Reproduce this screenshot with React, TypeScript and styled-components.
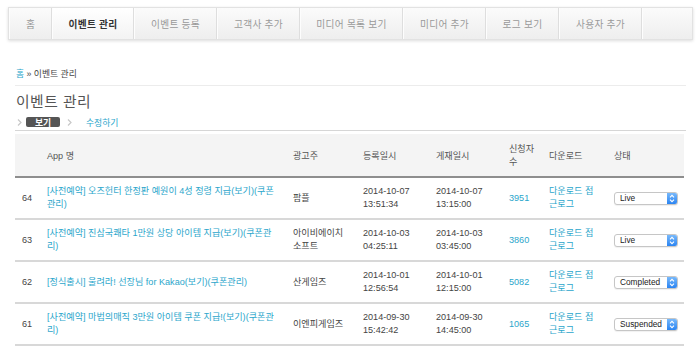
import React from "react";
import styled, { createGlobalStyle, css } from "styled-components";

const Global = createGlobalStyle`
  html, body { margin: 0; padding: 0; background: #fff; }
  body {
    font-family: "Liberation Sans", "Noto Sans CJK KR", sans-serif;
    color: #333;
  }
`;

const Page = styled.div`
  padding: 7px 7px 0 8px;
`;

const Nav = styled.nav`
  display: flex;
  width: 685px;
  height: 33px;
  box-sizing: border-box;
  background: linear-gradient(#fbfbfb, #eeeeee);
  border: 1px solid #e2e2e2;
  box-shadow: 0 1px 3px rgba(0, 0, 0, 0.14);
`;

const NavItem = styled.a<{ $w: number; $active?: boolean }>`
  display: flex;
  align-items: center;
  justify-content: center;
  width: ${(p) => p.$w}px;
  box-sizing: border-box;
  font-size: 9.7px;
  color: #999;
  letter-spacing: 0.3px;
  border-left: 1px solid #fdfdfd;
  border-right: 1px solid #dedede;
  text-decoration: none;
  ${(p) =>
    p.$active &&
    css`
      color: #333;
      font-weight: bold;
      background: linear-gradient(#ffffff, #f3f3f3);
    `}
`;

const NavFill = styled.div`
  flex: 1;
  border-left: 1px solid #fdfdfd;
`;

const Content = styled.div`
  width: 671px;
  margin-left: 7px;
`;

const Breadcrumb = styled.div`
  margin-top: 28px;
  height: 12px;
  line-height: 12px;
  padding: 0 0 5px 1px;
  border-bottom: 1px solid #ececec;
  font-size: 8.8px;
  color: #444;
`;

const Link = styled.a`
  color: #2ba6cb;
  text-decoration: none;
`;

const Title = styled.h1`
  margin: 6px 0 0 1px;
  height: 20px;
  line-height: 20px;
  font-size: 14.8px;
  font-weight: normal;
  color: #555;
  letter-spacing: 0.5px;
`;

const Tabs = styled.div`
  display: flex;
  align-items: center;
  margin-top: 5px;
  height: 10px;
  padding-bottom: 3px;
  border-bottom: 1px solid #d6d6d6;
`;

const Chevron = styled.svg<{ $gap: number }>`
  width: 5px;
  height: 7px;
  margin: 0 4px 0 ${(p) => p.$gap}px;
`;

const Tab = styled.a<{ $active?: boolean }>`
  display: flex;
  align-items: center;
  height: 10px;
  font-size: 8.8px;
  color: #2ba6cb;
  text-decoration: none;
  padding: 0 0 0 10px;
  ${(p) =>
    p.$active &&
    css`
      background: #555;
      color: #fff;
      font-weight: bold;
      border-radius: 2px;
      width: 34px;
      box-sizing: border-box;
      padding: 0 0 0 9px;
    `}
`;

const Table = styled.table`
  margin-top: 3px;
  width: 669px;
  border-collapse: collapse;
  table-layout: fixed;
  font-size: 9.1px;
  line-height: 13px;
`;

const Th = styled.th`
  height: 40px;
  padding: 2px 4px 0 7px;
  background: #f4f4f4;
  border-bottom: 2px solid #8e8e8e;
  text-align: left;
  font-weight: normal;
  color: #555;
  vertical-align: middle;
`;

const Td = styled.td<{ $right?: number }>`
  height: 40px;
  padding: 0 ${(p) => p.$right ?? 4}px 0 7px;
  border-bottom: 2px solid #d8d8d8;
  color: #444;
  vertical-align: middle;
`;

const Select = styled.div`
  display: flex;
  align-items: center;
  width: 64px;
  height: 13px;
  box-sizing: border-box;
  border: 1px solid #c6c6c6;
  border-radius: 3px;
  background: #fff;
  overflow: hidden;
  box-shadow: 0 1px 1px rgba(0, 0, 0, 0.06);
  font-size: 8.3px;
  color: #222;
`;

const SelectLabel = styled.span`
  flex: 1;
  padding-left: 5px;
  line-height: 11px;
`;

const SelectButton = styled.span`
  display: flex;
  align-items: center;
  justify-content: center;
  width: 10px;
  height: 100%;
  background: linear-gradient(#78b9fb, #2a84f2);
`;

const navItems: [string, number, boolean?][] = [
  ["홈", 43],
  ["이벤트 관리", 82, true],
  ["이벤트 등록", 83],
  ["고객사 추가", 83],
  ["미디어 목록 보기", 103],
  ["미디어 추가", 83],
  ["로그 보기", 73],
  ["사용자 추가", 83],
];

const rows = [
  {
    id: 64,
    name: "[사전예약] 오즈헌터 한정판 예원이 4성 정령 지급(보기)(쿠폰관리)",
    adv: "팜플",
    reg: ["2014-10-07", "13:51:34"],
    pub: ["2014-10-07", "13:15:00"],
    count: 3951,
    status: "Live",
  },
  {
    id: 63,
    name: "[사전예약] 진삼국쾌타 1만원 상당 아이템 지급(보기)(쿠폰관리)",
    adv: "아이비에이치 소프트",
    reg: ["2014-10-03", "04:25:11"],
    pub: ["2014-10-03", "03:45:00"],
    count: 3860,
    status: "Live",
  },
  {
    id: 62,
    name: "[정식출시] 울려라! 선장님 for Kakao(보기)(쿠폰관리)",
    adv: "산게임즈",
    reg: ["2014-10-01", "12:56:54"],
    pub: ["2014-10-01", "12:15:00"],
    count: 5082,
    status: "Completed",
  },
  {
    id: 61,
    name: "[사전예약] 마법의매직 3만원 아이템 쿠폰 지급!(보기)(쿠폰관리)",
    adv: "이엔피게임즈",
    reg: ["2014-09-30", "15:42:42"],
    pub: ["2014-09-30", "14:45:00"],
    count: 1065,
    status: "Suspended",
  },
];

const TabChevron = ({ gap }: { gap: number }) => (
  <Chevron $gap={gap} viewBox="0 0 5 7">
    <path d="M1 0.5 L4 3.5 L1 6.5" fill="none" stroke="#c8c8c8" strokeWidth="1.2" />
  </Chevron>
);

const StatusSelect = ({ value }: { value: string }) => (
  <Select>
    <SelectLabel>{value}</SelectLabel>
    <SelectButton>
      <svg width="6" height="9" viewBox="0 0 6 9">
        <path d="M1 3.3 L3 1.3 L5 3.3 M1 5.7 L3 7.7 L5 5.7" fill="none" stroke="#fff" strokeWidth="1.1" />
      </svg>
    </SelectButton>
  </Select>
);

export default function App() {
  return (
    <>
      <Global />
      <Page>
        <Nav>
          {navItems.map(([label, w, active]) => (
            <NavItem key={label} $w={w} $active={active}>
              {label}
            </NavItem>
          ))}
          <NavFill />
        </Nav>
        <Content>
          <Breadcrumb>
            <Link>홈</Link> » 이벤트 관리
          </Breadcrumb>
          <Title>이벤트 관리</Title>
          <Tabs>
            <TabChevron gap={2} />
            <Tab $active>보기</Tab>
            <TabChevron gap={7} />
            <Tab>수정하기</Tab>
          </Tabs>
          <Table>
            <colgroup>
              <col style={{ width: 25 }} />
              <col style={{ width: 246 }} />
              <col style={{ width: 70 }} />
              <col style={{ width: 73 }} />
              <col style={{ width: 73 }} />
              <col style={{ width: 40 }} />
              <col style={{ width: 65 }} />
              <col style={{ width: 77 }} />
            </colgroup>
            <thead>
              <tr>
                <Th></Th>
                <Th>App 명</Th>
                <Th>광고주</Th>
                <Th>등록일시</Th>
                <Th>게재일시</Th>
                <Th>신청자수</Th>
                <Th>다운로드</Th>
                <Th>상태</Th>
              </tr>
            </thead>
            <tbody>
              {rows.map((r) => (
                <tr key={r.id}>
                  <Td>{r.id}</Td>
                  <Td $right={7}>
                    <Link>{r.name}</Link>
                  </Td>
                  <Td>{r.adv}</Td>
                  <Td>
                    {r.reg[0]}
                    <br />
                    {r.reg[1]}
                  </Td>
                  <Td>
                    {r.pub[0]}
                    <br />
                    {r.pub[1]}
                  </Td>
                  <Td>
                    <Link>{r.count}</Link>
                  </Td>
                  <Td $right={10}>
                    <Link>다운로드 접근로그</Link>
                  </Td>
                  <Td>
                    <StatusSelect value={r.status} />
                  </Td>
                </tr>
              ))}
            </tbody>
          </Table>
        </Content>
      </Page>
    </>
  );
}
